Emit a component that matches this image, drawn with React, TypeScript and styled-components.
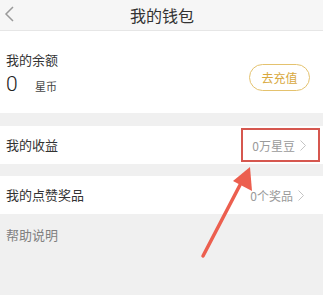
import styled, { createGlobalStyle } from 'styled-components'

const GlobalStyle = createGlobalStyle`
  html, body {
    margin: 0;
    padding: 0;
    background: #f0f0f0;
  }
  body {
    font-family: "Noto Sans CJK SC", "Noto Sans", sans-serif;
    color: #333;
  }
`

const Page = styled.div`
  position: relative;
  width: 323px;
  height: 295px;
  overflow: hidden;
  background: #f0f0f0;
`

const Header = styled.div`
  height: 30px;
  background: #f6f6f6;
  border-bottom: 1px solid #e6e6e6;
  display: flex;
  align-items: center;
  justify-content: center;
  position: relative;
`

const Back = styled.svg`
  position: absolute;
  left: 4px;
  top: 6px;
`

const Title = styled.div`
  font-size: 16px;
  line-height: 1;
  color: #333;
  margin-left: 1px;
`

const BalanceCard = styled.div`
  height: 82px;
  background: #fff;
  display: flex;
  align-items: center;
  justify-content: space-between;
  padding: 0 13px 0 6px;
  margin-bottom: 13px;
`

const BalanceInfo = styled.div`
  display: flex;
  flex-direction: column;
  padding-top: 4px;
`

const Label = styled.div`
  font-size: 13px;
  line-height: 16px;
  color: #333;
`

const Amount = styled.div`
  display: flex;
  align-items: baseline;
  margin-top: 4px;
`

const Number = styled.span`
  font-family: "Roboto", "Noto Sans", sans-serif;
  font-weight: 300;
  font-size: 21px;
  line-height: 24px;
  color: #222;
  width: 29px;
`

const Unit = styled.span`
  font-size: 11px;
  color: #444;
`

const RechargeButton = styled.button`
  width: 61px;
  height: 27px;
  margin-top: 10px;
  border: 1px solid #e4c26e;
  border-radius: 14px;
  background: #fff;
  color: #d8a93e;
  font-family: inherit;
  font-size: 12px;
  padding: 0;
`

const Row = styled.div<{ $gap?: number }>`
  height: 38px;
  background: #fff;
  display: flex;
  align-items: center;
  justify-content: space-between;
  padding-left: 6px;
  margin-bottom: ${p => p.$gap ?? 0}px;
`

const RowValue = styled.div<{ $boxed?: boolean }>`
  display: flex;
  align-items: center;
  gap: 5px;
  height: 30px;
  padding: 0 12px 0 ${p => (p.$boxed ? 9 : 11)}px;
  margin-right: ${p => (p.$boxed ? 3 : 5)}px;
  border: 2px solid ${p => (p.$boxed ? '#d6574f' : 'transparent')};
  font-size: 12px;
  color: #9a9a9a;
`

const Help = styled.div`
  padding: 11px 6px 0;
  font-size: 13px;
  color: #808080;
`

const Arrow = styled.svg`
  position: absolute;
  left: 0;
  top: 0;
  pointer-events: none;
`

const Chevron = () => (
  <svg width="6" height="11" viewBox="0 0 6 11">
    <path d="M0.5 0.5 L5.5 5.5 L0.5 10.5" fill="none" stroke="#c4c4c4" strokeWidth="1" />
  </svg>
)

const App = () => (
  <Page>
    <GlobalStyle />
    <Header>
      <Back width="11" height="16" viewBox="0 0 11 16">
        <path d="M9 1 L2 8 L9 15" fill="none" stroke="#9a9a9a" strokeWidth="1.5" />
      </Back>
      <Title>我的钱包</Title>
    </Header>
    <BalanceCard>
      <BalanceInfo>
        <Label>我的余额</Label>
        <Amount>
          <Number>0</Number>
          <Unit>星币</Unit>
        </Amount>
      </BalanceInfo>
      <RechargeButton>去充值</RechargeButton>
    </BalanceCard>
    <Row $gap={12}>
      <Label>我的收益</Label>
      <RowValue $boxed>
        0万星豆
        <Chevron />
      </RowValue>
    </Row>
    <Row>
      <Label>我的点赞奖品</Label>
      <RowValue>
        0个奖品
        <Chevron />
      </RowValue>
    </Row>
    <Help>帮助说明</Help>
    <Arrow width="323" height="295" viewBox="0 0 323 295">
      <line x1="203" y1="256" x2="240" y2="185" stroke="#ec5f4f" strokeWidth="3.5" strokeLinecap="round" />
      <polygon points="250,167 252,191 233,181" fill="#ec5f4f" />
    </Arrow>
  </Page>
)

export default App
